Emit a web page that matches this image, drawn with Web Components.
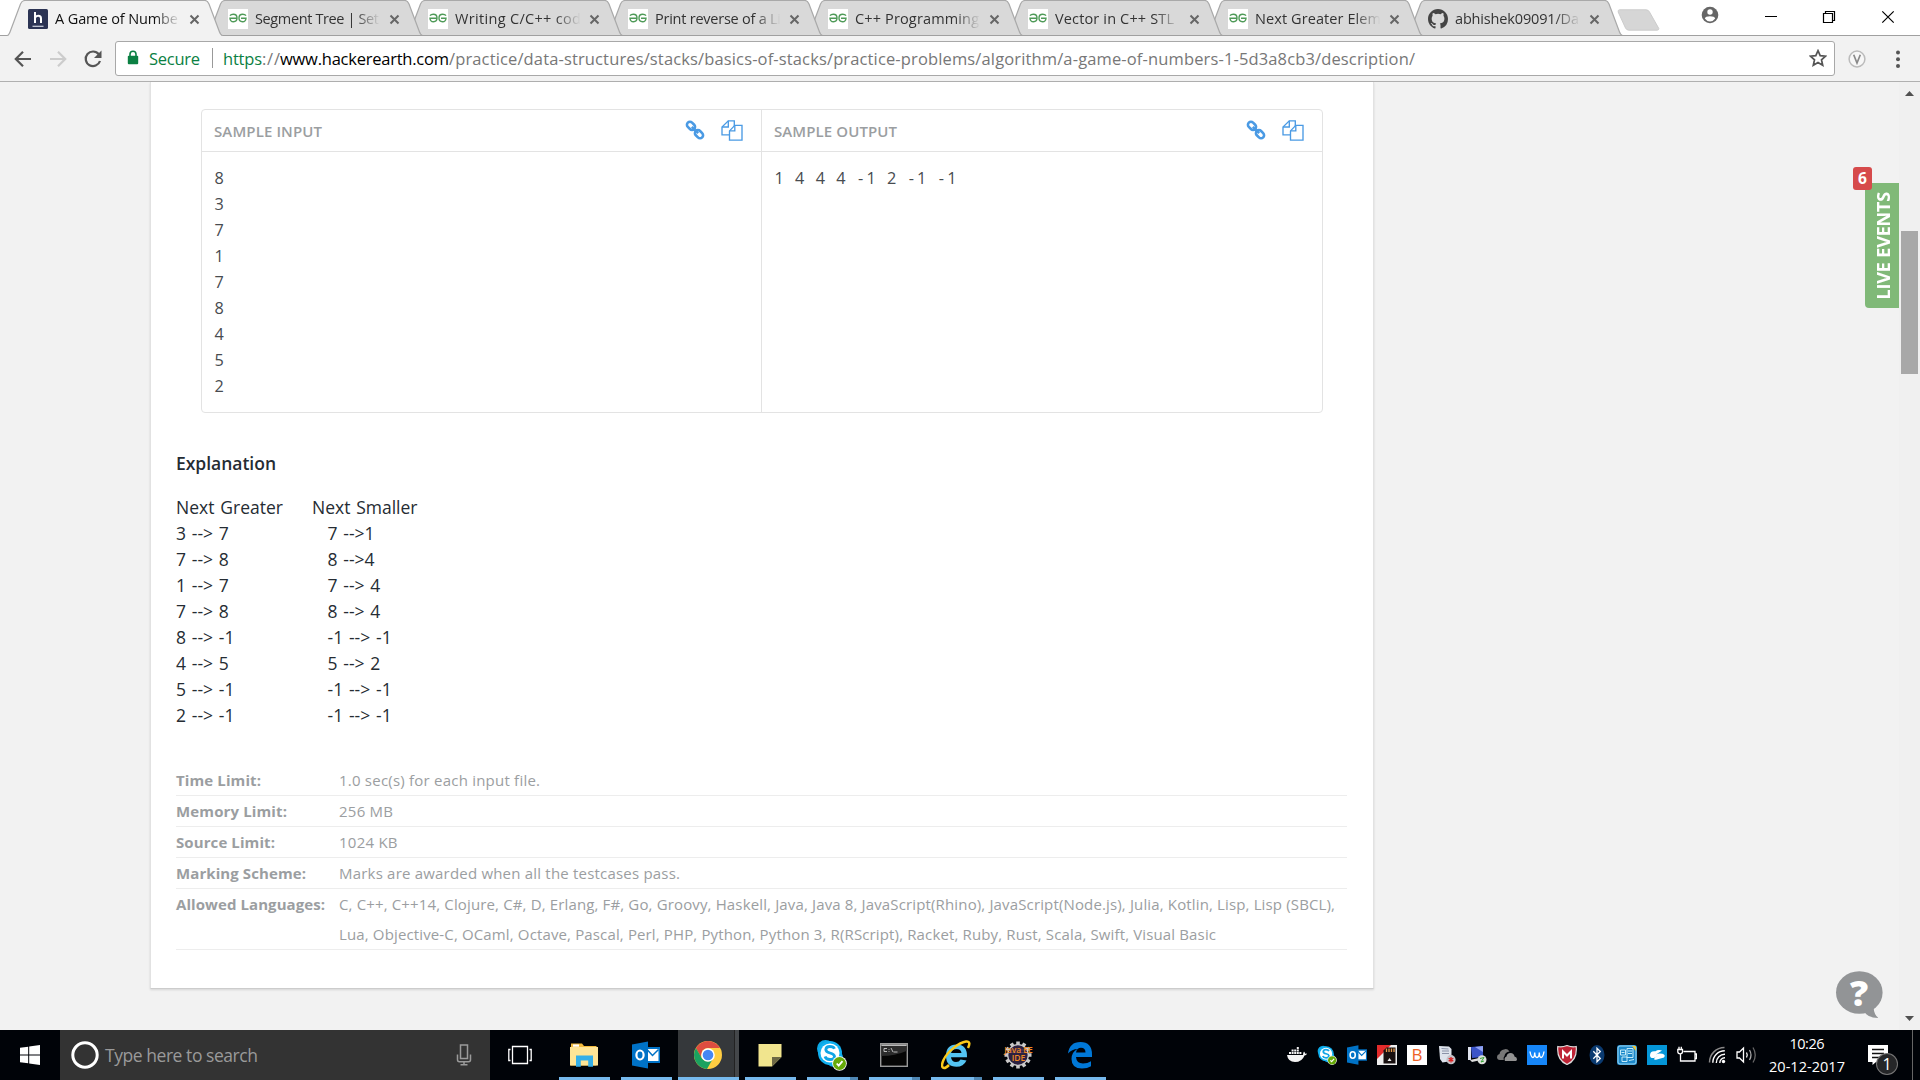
<!DOCTYPE html>
<html lang="en">
<head>
<meta charset="utf-8">
<title>A Game of Numbers</title>
<style>
html,body{margin:0;padding:0;height:1080px;overflow:hidden;background:#f2f2f2}
body{font-family:"Open Sans","Noto Sans",sans-serif}
</style>
</head>
<body>
<app-desktop></app-desktop>
<script>
const define=(name,html,after)=>customElements.define(name,class extends HTMLElement{
  connectedCallback(){
    if(this.shadowRoot)return;
    const t=document.createElement('template');
    t.innerHTML=typeof html==='function'?html(this):html;
    this.attachShadow({mode:'open'}).appendChild(t.content.cloneNode(true));
    if(after)after(this);
  }
});

/* Text run spaced to occupy an exact width: <fit-text w="120">label</fit-text> */
define('fit-text','<style>:host{display:block;white-space:pre;width:max-content}span{display:inline-block}</style><span><slot></slot></span>',el=>{
  const s=el.shadowRoot.querySelector('span'),w=+el.getAttribute('w');
  el.style.width=w+'px';
  const n=el.textContent.length;
  if(w&&n>1)s.style.letterSpacing=((w-s.getBoundingClientRect().width)/(n-1)).toFixed(4)+'px';
});

const I={
h:[20,20,`<rect width="20" height="20" rx="1.5" fill="#2c3454"/><path d="M7 3v11M7 8.6q1.400-1.800 3.300-1.800 2.700 0 2.700 2.600V14" fill="none" stroke="#fff" stroke-width="2"/><path d="M4.500 17.300h11" stroke="#cfd3e0" stroke-width="1.200"/>`],
gfg:[20,20,`<rect width="20" height="20" fill="#fff"/><g fill="none" stroke="#4f9a58" stroke-width="1.400"><path d="M2 6.700Q3 5.300 5.300 5.300 9 5.300 9 9T5.500 12.700Q2.200 12.700 2 9.200H9"/><path d="M18 6.700Q17 5.300 14.700 5.300 11 5.300 11 9T14.500 12.700Q17.800 12.700 18 9.200H13"/></g>`],
github:[20,20,`<path transform="scale(1.25)" fill="#444" d="M8 0C3.580 0 0 3.580 0 8c0 3.540 2.290 6.530 5.470 7.590.4.070.55-.17.55-.38v-1.490c-2.010.37-2.530-.49-2.690-.94-.09-.23-.48-.94-.82-1.130-.28-.15-.68-.52-.01-.53.63-.01 1.080.58 1.230.82.72 1.210 1.870.87 2.330.66.070-.52.28-.87.51-1.070-1.780-.2-3.640-.89-3.640-3.950 0-.87.31-1.590.82-2.150-.08-.2-.36-1.020.08-2.120 0 0 .67-.21 2.200.82a7.600 7.600 0 0 1 4 0c1.530-1.040 2.200-.82 2.200-.82.44 1.100.16 1.920.08 2.120.51.56.82 1.270.82 2.150 0 3.070-1.870 3.750-3.650 3.950.29.25.54.73.54 1.480v2.190c0 .21.15.46.55.38A8 8 0 0 0 16 8c0-4.420-3.580-8-8-8z"/>`],
x:[11,11,`<path d="M1.500 1.500l8 8M9.500 1.500l-8 8" stroke="#666" stroke-width="2"/>`],
back:[18,18,`<path d="M17 9H2M9 1.800L1.800 9 9 16.200" fill="none" stroke="#555" stroke-width="2.200"/>`],
fwd:[18,18,`<path d="M1 9h15M9 1.800L16.200 9 9 16.200" fill="none" stroke="#ccc" stroke-width="2.200"/>`],
reload:[20,20,`<path d="M15.800 5.300A7.300 7.300 0 1 0 17 12" fill="none" stroke="#555" stroke-width="2.200"/><path d="M18.500 1.500v7.500h-7.500z" fill="#555"/>`],
lock:[12,15,`<rect x=".8" y="5.800" width="10.400" height="8.500" rx="1" fill="#0b8043"/><path d="M3 6.500V4.200a3 3 0 0 1 6 0v2.300" fill="none" stroke="#0b8043" stroke-width="1.600"/>`],
star:[18,18,`<path d="M9 1.700l2.200 5 5.300.5-4 3.600 1.200 5.400L9 13.400l-4.700 2.800 1.200-5.400-4-3.600 5.300-.5z" fill="none" stroke="#555" stroke-width="1.700"/>`],
v:[18,18,`<circle cx="9" cy="9" r="7.900" fill="#f7f7f7" stroke="#bbb" stroke-width="1.500"/><path d="M5.700 4.800L9 13l3.300-8.200" fill="none" stroke="#8a8a8a" stroke-width="1.700"/>`],
dots:[6,18,`<g fill="#555"><circle cx="3" cy="2.500" r="2"/><circle cx="3" cy="9.300" r="2"/><circle cx="3" cy="16" r="2"/></g>`],
user:[18,18,`<circle cx="9" cy="9" r="8.300" fill="#666"/><circle cx="9" cy="6" r="2.700" fill="#fff"/><path d="M3.800 12.600Q4.500 10.300 9 10.300T14.200 12.600Q12.400 15.400 9 15.400T3.800 12.600z" fill="#fff"/>`],
min:[14,14,`<path d="M1 7.500h12" stroke="#000"/>`],
restore:[14,14,`<path d="M1.500 3.500h9v9h-9zM3.500 3.500v-2h9v9h-2" fill="none" stroke="#000" stroke-width="1.200"/>`],
close:[14,14,`<path d="M1.300 1.300l11.400 11.400M12.700 1.300L1.300 12.700" stroke="#000" stroke-width="1.200"/>`],
plus:[44,22,`<path d="M2.500.8H29Q31.500.8 32.500 3L41.800 19.500Q42 21.200 40 21.200H12Q9.500 21.200 8.500 19L1.200 3Q.8.8 2.500.8z" fill="#d6d6d6" stroke="#ccc"/>`],
link:[20,20,`<g fill="none" stroke="#4a9ae4" stroke-width="2.600"><rect x="1.500" y="2.800" width="9" height="6" rx="3" transform="rotate(45 6 5.800)"/><rect x="9.500" y="11.200" width="9" height="6" rx="3" transform="rotate(45 14 14.200)"/><path d="M6.800 6.800l6.400 6.400" stroke-width="2.400"/></g>`],
copy:[22,21,`<g fill="#fff" stroke="#4a9ae4" stroke-width="1.350"><path d="M7.300.8h6v14H1V7z"/><path d="M7.300.8V7H1" fill="none"/><path d="M13.800 5.300h7.200v14.800H8.500v-9.200z"/><path d="M13.800 5.300v5.600H8.500" fill="none"/></g>`],
help:[48,50,`<ellipse cx="24.300" cy="21.500" rx="23.300" ry="21.300" fill="#929496"/><path d="M29 40Q32 47 43.500 47 39 44 38.500 36z" fill="#929496"/>`],
up:[21,20,`<path d="M6 14h9l-4.500-5z" fill="#505050"/>`],
down:[21,20,`<path d="M6 6h9l-4.500 5z" fill="#505050"/>`],
win:[20,20,`<path d="M0 2.800L8.200 1.700V9.500H0zM9.200 1.500L20 0v9.500H9.200zM0 10.500h8.200v7.800L0 17.200zM9.200 10.500H20V20L9.200 18.500z" fill="#fff"/>`],
cortana:[28,28,`<circle cx="14" cy="14" r="12.200" fill="none" stroke="#fff" stroke-width="3"/>`],
mic:[16,22,`<g fill="none" stroke="#9a9a9a" stroke-width="1.500"><rect x="4.500" y="1" width="7" height="13.500"/><path d="M1.500 10.500v5.300q0 2 2 2h9q2 0 2-2v-5.300M8 18v3M4.500 20.800h7"/></g>`],
taskview:[24,20,`<path d="M4.500 1.500h15v17h-15zM2.500 4.500H.8v11h1.700M21.500 4.500h1.700v11h-1.700" fill="none" stroke="#fff" stroke-width="1.300"/>`],
explorer:[28,24,`<path d="M1 .5h11l2 2.500h12.500V22.500H.5z" fill="#f3bb3d"/><path d="M0 4h28v18.500H0z" fill="#ffe596"/><path d="M3 1.500h6v2.200H3z" fill="#fff"/><path d="M6 23.800V12.500h17v11.300h-4.800v-6.300h-7.400v6.300z" fill="#35afe8"/>`],
outlook:[28,28,`<path d="M13 6h15v16H13z" fill="#0072c6"/><path d="M15 8h11.500v12H15z" fill="#fff"/><path d="M15 8.500l5.500 6 6-6" fill="none" stroke="#0072c6" stroke-width="1.500"/><path d="M0 3.500L16 .5v27L0 24.500z" fill="#0072c6"/><ellipse cx="8" cy="14" rx="3.600" ry="4.500" fill="none" stroke="#fff" stroke-width="2.200"/>`],
chrome:[28,28,`<circle cx="14" cy="14" r="14" fill="#ffcd42"/><path d="M1.900 7A14 14 0 0 1 26.100 7H14A7 7 0 0 0 8 10.500L7 16z" fill="#de4d40"/><path d="M1.900 7A14 14 0 0 0 13 28l6-10.500A7 7 0 0 1 8 17.500z" fill="#1ba260"/><circle cx="14" cy="14" r="6.800" fill="#fff"/><circle cx="14" cy="14" r="5.300" fill="#4687f4"/>`],
sticky:[24,24,`<path d="M.5 1h23v13L14 23.500H.5z" fill="#f1e58e"/><path d="M14 23.500V14h9.500z" fill="#6d6845"/>`],
skype:[31,32,`<circle cx="9.500" cy="9.500" r="8.500" fill="#0ba8e5"/><circle cx="18" cy="19" r="9" fill="#0ba8e5"/><circle cx="14" cy="14" r="12" fill="#10b0f0"/><circle cx="14" cy="14" r="9.500" fill="#fff"/><path d="M18.500 9.800Q17.500 7.500 13.800 7.500T9.800 10.600Q9.800 13 14 14T18.500 17.200Q18.500 20.500 14 20.500 10 20.500 9 17.500" fill="none" stroke="#10a5e6" stroke-width="2.800"/><circle cx="23.500" cy="24.500" r="7.300" fill="#fff"/><circle cx="23.500" cy="24.500" r="6.500" fill="#66aa08"/><path d="M20.700 24.500l2 2.200 3.800-4.500" fill="none" stroke="#fff" stroke-width="1.800"/>`],
cmd:[28,24,`<rect x=".7" y=".7" width="26.600" height="22.600" fill="#050505" stroke="#999" stroke-width="1.400"/><path d="M1.400 1.400h25.200v1.600H1.400z" fill="#bbb"/><path d="M1.500 13Q15 13 26.500 8v-5h-25z" fill="#2c2c2c"/><path d="M4 5.500h3M4 5.500v3h3M9 6v.8M9 8v.8M11 5l2 4M13.500 9h4" fill="none" stroke="#ccc" stroke-width=".9"/>`],
ie:[30,30,`<path d="M25.500 20.500Q22.500 26.800 15.500 26.800 5 26.800 5 15.800T15.500 4.500Q26.500 4.500 26 17.300H10Q10.500 22 15 22q3.200 0 4.500-2.500z" fill="#54c4f3"/><path d="M10 13h10.500Q20 9 15.500 9T10 13z" fill="#000309"/><path d="M8 25C2.500 30.500-1 28 2.500 20 6 12 18 2.500 25 1.600 29 1 29 4 27 8" fill="none" stroke="#fbc91a" stroke-width="2.500"/>`],
eclipse:[30,30,`<g fill="#c9c9c9"><circle cx="15" cy="15" r="11"/><path d="M13.200 1.500h3.600v27h-3.600zM1.500 13.200h27v3.600h-27z"/><path d="M13.200 1.500h3.600v27h-3.600zM1.500 13.200h27v3.600h-27z" transform="rotate(30 15 15)"/><path d="M13.200 1.500h3.600v27h-3.600zM1.500 13.200h27v3.600h-27z" transform="rotate(60 15 15)"/></g><circle cx="15" cy="15" r="9.700" fill="#2c2140"/><path d="M8 10h14M7 12.500h16" stroke="#4a3860"/>`],
edge:[26,28,`<path d="M1 12.500Q2.500 1 13.500 1 25 1 25 13.500V16H9Q9.500 22.500 16 22.500q4.500 0 8-2.200v5Q20.500 27.500 15 27.500 4.500 27.500 4.500 18 4.500 11 10.500 8 5 8 1 12.500zM9 11.500h9.500Q18.500 6.800 14 6.800 9.800 6.800 9 11.500z" fill="#0078d7"/>`],
docker:[20,20,`<path d="M0 10h16q0-2.500 1-3.500 1 1 1.200 2.200 1-.4 1.800 0-.6 1.500-2.500 1.700Q15 17 8 17 1 17 0 10z" fill="#f4f4f4"/><path d="M2 7h2v2H2zM4.600 7h2v2h-2zM7.200 7h2v2h-2zM9.800 7h2v2h-2zM12.400 7h2v2h-2zM4.600 4.400h2v2h-2zM7.200 4.400h2v2h-2zM9.800 4.400h2v2h-2zM9.800 2h2v2h-2z" fill="#f4f4f4"/>`],
card:[20,20,`<path d="M0 0h20v20H0z" fill="#e32b2b"/><path d="M0 8L8 0h12v3L0 20z" fill="#e32b2b"/><path d="M0 20V14L14 0h6v20z" fill="#eee"/><path d="M6.500 5.500L9.500 2.500h9v16h-12z" fill="#181010"/><path d="M9.500 3.500v3.500M12 3.500v3.500M14.500 3.500v3.500M17 3.500v3.500" stroke="#e89b4b" stroke-width="1.300"/><path d="M10.500 16l2-3 2 3z" fill="#eee"/>`],
bbox:[20,20,`<path d="M0 0h20v20H0z" fill="#fff"/>`],
server:[20,20,`<path d="M2 1l10 .5 2.500 2.500v12l-9 1.500L3 14z" fill="#dde3ec"/><path d="M4.500 3.500l7 .5M5 6h7M5 8.500h7" fill="none" stroke="#8a92a8" stroke-width="1"/><circle cx="14" cy="14.700" r="4.600" fill="#c3c3c9"/><path d="M14 12v5.400M11.700 13.300l4.600 2.800M16.300 13.300l-4.600 2.800" stroke="#d22" stroke-width="1.300"/>`],
monitor:[20,20,`<path d="M1 2h3v13H1z" fill="#dfe3ee"/><path d="M4 2l12-1v11L5 13z" fill="#3b54c8"/><path d="M8 2l8-1v6z" fill="#8ea1f2"/><path d="M3 15l9-2 2 2-9 2z" fill="#ddd"/><circle cx="15" cy="14.800" r="4.500" fill="#dbe0db"/><path d="M13 13.500l4-1-3 4.500 3-1" fill="none" stroke="#36a336" stroke-width="1"/>`],
onedrive:[20,14,`<path d="M3 12Q0 12 0 9q0-2.500 2.500-3Q3 2 7 1.500 10 0 12.500 3.500 8 4 7.500 8 6 9.500 6.800 12z" fill="#777"/><path d="M8 13Q6.500 10 9.500 8.500 10 5 13.500 5t4 3.500Q20 9 20 11.300T18 13z" fill="#929292"/>`],
wave:[20,20,`<path d="M0 0h20v20H0z" fill="#1686f8"/><path d="M3 6.500q1 6 3 6 1.500 0 1.700-5 .2 5 2.300 5 2.100 0 2.300-5 .2 5 1.700 5 2 0 3-6" fill="none" stroke="#fff" stroke-width="1.400"/>`],
mcafee:[20,20,`<path d="M.8 1.500Q5 2.500 10 .5q5 2 9.200 1Q20.500 15 10 19.500-.5 15 .8 1.500z" fill="#bf2335" stroke="#ddd" stroke-width="1.200"/><path d="M6 13.500V6.500L10 10.500 14 6.500v7" fill="none" stroke="#fff" stroke-width="2"/>`],
bt:[20,20,`<ellipse cx="10" cy="10" rx="7.500" ry="10" fill="#0a3a70"/><path d="M6.300 6.200l7 7.300L10 16.800V3.200l3.300 3.300-7 7.300" fill="none" stroke="#fff" stroke-width="1.300"/>`],
intel:[20,20,`<rect width="20" height="20" rx="2.500" fill="#1d88c9"/><rect x="1" y="1" width="18" height="18" rx="2" fill="none" stroke="#9fd8f4"/><path d="M3.500 5h5v5h-5zM10 3.500h6v9h-6zM5 12h5v4.500H5z" fill="none" stroke="#c5ecfa"/><path d="M11 6h4M11 8.500h4M4.500 7.500h3M12 15.500l5-1" stroke="#c5ecfa"/><path d="M15 1h4v5z" fill="#e9c643"/>`],
swirl:[20,20,`<path d="M0 0h20v20H0z" fill="#0496d8"/><path d="M3 10.500Q3 5.500 8.500 6.300 11 4 15 5.500L9 9.500Q12 7.700 15.500 8.800 19 10 17 12.500L9 14.800Q6 15 8 12.500L12 10 7 13Q3 13.500 3 10.500z" fill="#fff"/>`],
battery:[20,18,`<path d="M6.500 5.500H18v9.500H3.500V9.500M18.500 8h1v4.500h-1M.8 3.500h4.700v2.300q0 2-2.300 2T.8 5.800zM2 3.500V.8M4.300 3.500V.8M3.500 8v2" fill="none" stroke="#fff" stroke-width="1.300"/>`],
wifi:[18,18,`<g fill="none"><path d="M1.500 16.500A15 15 0 0 1 16.500 1.500" stroke="#888" stroke-width="1.500"/><path d="M4.800 16.800A12 12 0 0 1 16.800 4.800M8.300 17A8.500 8.500 0 0 1 17 8.300M11.800 17A5 5 0 0 1 17 11.800" stroke="#fff" stroke-width="1.400"/></g><circle cx="15.500" cy="15.500" r="1.700" fill="#fff"/>`],
sound:[22,20,`<path d="M1 7h2.500L7.500 3v14l-4-4H1z" fill="none" stroke="#fff" stroke-width="1.300"/><path d="M10.500 7.500q1.500 2.500 0 5" fill="none" stroke="#fff" stroke-width="1.300"/><path d="M13.500 5q3 5 0 10" fill="none" stroke="#aaa" stroke-width="1.300"/><path d="M17 2.500q4.500 7.500 0 15" fill="none" stroke="#666" stroke-width="1.300"/>`],
note:[20,20,`<path d="M0 0h20v17H8L4.500 20v-3H0z" fill="#fff"/><path d="M4 4.500h12M4 8.500h12M4 12.500h8" stroke="#111" stroke-width="1.400"/>`]
};
define('svg-icon',el=>{
  const [w,h,b]=I[el.getAttribute('name')],W=el.getAttribute('w')||w,H=el.getAttribute('h')||h;
  return `<style>:host{display:block;flex:none;width:${W}px;height:${H}px}svg{display:block}</style><svg width="${W}" height="${H}" viewBox="0 0 ${w} ${h}" preserveAspectRatio="none">${b}</svg>`;
});

define('browser-tab',el=>{
  const on=el.hasAttribute('active');
  return `<style>:host{display:grid;flex:0 0 216px;height:36px;margin-right:-16px;z-index:${el.getAttribute('z')};position:relative}
  .bg,.in{grid-area:1/1}.bg{display:block}
  .in{display:flex;align-items:center;padding:0 0 0 21px;height:38px;font-size:14.500px;color:${on?'#111':'#333'}}
  .t{width:128px;margin-left:7px;margin-top:-2px;-webkit-mask-image:linear-gradient(90deg,#000 78%,transparent 98%);mask-image:linear-gradient(90deg,#000 78%,transparent 98%)}
  .x{margin-left:6px}</style>
  <svg class="bg" width="216" height="36"><path d="M0 36Q2 35 3 32L13.500 4Q15 .5 18 .5H198Q200.500 .5 202 4L212.500 32Q213.500 35 216 36" fill="${on?'#f2f2f2':'#d9d9d9'}" stroke="#a9a9a9" stroke-width="1.200"/>${on?'':'<path d="M0 35.500H216" stroke="#a0a0a0"/>'}</svg>
  <div class="in"><svg-icon name="${el.getAttribute('icon')}"></svg-icon><div class="t"><fit-text w="${el.getAttribute('w')}">${el.getAttribute('label')}</fit-text></div><svg-icon class="x" name="x"></svg-icon></div>`;
});

define('tab-strip',`<style>:host{display:flex;height:36px;background:linear-gradient(#a0a0a0,#a0a0a0) 0 35px/100% 1px no-repeat #fff;padding-left:7px}
.tabs{display:flex;width:1616px}.new{padding:9px 0 0;margin-left:-6px}
.ctl{display:flex;align-items:flex-start}
.u{margin:6px 0 0 40px}.a{margin:9px 0 0 45px}.b{margin:10px 0 0 44px}.c{margin:10px 0 0 45px}</style>
<div class="tabs">
<browser-tab active z="9" icon="h" w="123" label="A Game of Numbe"></browser-tab>
<browser-tab z="8" icon="gfg" w="124" label="Segment Tree | Set"></browser-tab>
<browser-tab z="7" icon="gfg" w="126" label="Writing C/C++ cod"></browser-tab>
<browser-tab z="6" icon="gfg" w="126" label="Print reverse of a Li"></browser-tab>
<browser-tab z="5" icon="gfg" w="124" label="C++ Programming"></browser-tab>
<browser-tab z="4" icon="gfg" w="119" label="Vector in C++ STL"></browser-tab>
<browser-tab z="3" icon="gfg" w="126" label="Next Greater Elem"></browser-tab>
<browser-tab z="2" icon="github" w="124" label="abhishek09091/Da"></browser-tab>
</div><div class="new"><svg-icon name="plus"></svg-icon></div>
<div class="ctl"><svg-icon class="u" name="user"></svg-icon><svg-icon class="a" name="min"></svg-icon><svg-icon class="b" name="restore"></svg-icon><svg-icon class="c" name="close"></svg-icon></div>`);

define('address-bar',`<style>:host{display:flex;align-items:center;height:45px;background:#f2f2f2;border-bottom:1px solid #b0b0b0;padding:0 19px 0 14px}
.f{margin-left:17px}.r{margin:0 12px 0 16px}
.box{flex:none;width:1718px;height:33px;border:1px solid #a8a8a8;border-radius:3px;background:#fff;display:flex;align-items:center;margin-top:-1px;font-size:16.500px;color:#777}
.lock{margin:0 10px 2px 11px}.g{color:#0b8043}.k{color:#000}.sep{width:1px;height:20px;background:#999;margin:0 10px 0 12px}
.s{margin-left:auto;margin-right:7px}.v{margin-left:13px}.d{margin-left:auto}</style>
<svg-icon name="back"></svg-icon><svg-icon class="f" name="fwd"></svg-icon><svg-icon class="r" name="reload"></svg-icon>
<div class="box"><svg-icon class="lock" name="lock"></svg-icon><fit-text w="51" class="g">Secure</fit-text><i class="sep"></i><fit-text w="39" class="g">https</fit-text><fit-text w="18">://</fit-text><fit-text w="169" class="k">www.hackerearth.com</fit-text><fit-text w="966">/practice/data-structures/stacks/basics-of-stacks/practice-problems/algorithm/a-game-of-numbers-1-5d3a8cb3/description/</fit-text><svg-icon class="s" name="star"></svg-icon></div>
<svg-icon class="v" name="v"></svg-icon><svg-icon class="d" name="dots"></svg-icon>`);

define('sample-pane',el=>`<style>:host{display:block;flex:1;box-sizing:border-box}
:host(:first-child){flex:0 0 560px;border-right:1px solid #e3e3e3}
.hd{display:flex;align-items:center;height:41px;border-bottom:1px solid #e3e3e3;padding:0 18px 0 12px;font-size:15px;font-weight:600;color:#9b9ea1}
.l{margin-left:auto;margin-top:-1px}.c{margin-left:16px}
pre{margin:0;padding:13px 12.500px;font:16.250px/26px "Open Sans","Noto Sans",sans-serif;color:#484c50;word-spacing:7.100px}::slotted(i){font-style:normal;letter-spacing:3.200px;margin-left:1px}</style>
<div class="hd"><fit-text w="${el.getAttribute('w')}">${el.getAttribute('label')}</fit-text><svg-icon class="l" name="link"></svg-icon><svg-icon class="c" name="copy"></svg-icon></div><pre><slot></slot></pre>`);

const ex=[['3 --> 7','7 -->1'],['7 --> 8','8 -->4'],['1 --> 7','7 --> 4'],['7 --> 8','8 --> 4'],['8 --> -1','-1 --> -1'],['4 --> 5','5 --> 2'],['5 --> -1','-1 --> -1'],['2 --> -1','-1 --> -1']];
define('problem-explanation',`<style>:host{display:block;font-size:17.500px;line-height:26px;color:#252c33}h4{margin:0;font-size:17.500px;font-weight:600;line-height:26px;height:44px}.r{display:flex;word-spacing:1.250px}.r>*:first-child{flex:0 0 136px}.r>.o:first-child{flex-basis:151.500px}</style>
<h4><fit-text w="100">Explanation</fit-text></h4><div class="r"><div><fit-text w="107">Next Greater</fit-text></div><fit-text w="105.5">Next Smaller</fit-text></div>
${ex.map(r=>`<div class="r"><div class="o">${r[0].replace('>','&gt;')}</div><div>${r[1].replace('>','&gt;')}</div></div>`).join('')}`);

define('limit-row',el=>`<style>:host{display:flex;border-bottom:1px solid #ededed;font-size:15px;line-height:30px;color:#9b9ea1}b{flex:0 0 163px;font-weight:700}</style><b><fit-text w="${el.getAttribute('w')}">${el.getAttribute('label')}</fit-text></b><div><slot></slot></div>`);

define('problem-card',`<style>:host{display:block;box-sizing:border-box;width:1224px;height:907px;margin-left:150px;background:#fff;border:1px solid #e2e2e2;border-top:0;border-bottom-color:#ccc;box-shadow:0 1px 2px rgba(0,0,0,.12);padding:27px 25px 0}
.s{display:flex;box-sizing:border-box;width:1122px;height:304px;margin-left:25px;border:1px solid #e3e3e3;border-radius:4px}
problem-explanation{margin:37px 0}.lim{width:1171px}</style>
<div class="s"><sample-pane label="SAMPLE INPUT" w="108">8
3
7
1
7
8
4
5
2</sample-pane><sample-pane label="SAMPLE OUTPUT" w="123">1 4 4 4 <i>-</i>1 2 <i>-</i>1 <i>-</i>1</sample-pane></div>
<problem-explanation></problem-explanation>
<div class="lim">
<limit-row label="Time Limit:" w="85"><fit-text w="201">1.0 sec(s) for each input file.</fit-text></limit-row>
<limit-row label="Memory Limit:" w="111"><fit-text w="54">256 MB</fit-text></limit-row>
<limit-row label="Source Limit:" w="99"><fit-text w="58.5">1024 KB</fit-text></limit-row>
<limit-row label="Marking Scheme:" w="130"><fit-text w="341">Marks are awarded when all the testcases pass.</fit-text></limit-row>
<limit-row label="Allowed Languages:" w="149"><fit-text w="996">C, C++, C++14, Clojure, C#, D, Erlang, F#, Go, Groovy, Haskell, Java, Java 8, JavaScript(Rhino), JavaScript(Node.js), Julia, Kotlin, Lisp, Lisp (SBCL),</fit-text><fit-text w="877">Lua, Objective-C, OCaml, Octave, Pascal, Perl, PHP, Python, Python 3, R(RScript), Racket, Ruby, Rust, Scala, Swift, Visual Basic</fit-text></limit-row>
</div>`);

define('scroll-bar',`<style>:host{display:flex;flex-direction:column;width:21px;height:948px;background:#f0f0f0}.t{width:17px;height:143px;background:#a8a8a8;margin:129px 0 auto 2px}</style><svg-icon name="up"></svg-icon><div class="t"></div><svg-icon name="down"></svg-icon>`);

define('live-events',`<style>:host{position:absolute;right:21px;top:101px;width:34px;height:125px;background:#80b978;border-radius:4px 0 0 4px;display:flex;align-items:center;justify-content:center;color:#fff}
.t{writing-mode:vertical-rl;transform:rotate(180deg);font-size:18px;font-weight:700;line-height:22px;letter-spacing:-.18px;white-space:nowrap;margin-left:2px}
.n{position:absolute;left:-12px;top:-16px;width:19px;height:23px;border-radius:3px;background:#d64a4b;font-size:15.500px;line-height:23px;font-weight:700;text-align:center}</style><span class="t">LIVE EVENTS</span><span class="n">6</span>`);

define('help-bubble',`<style>:host{position:absolute;left:1835px;top:889px;display:grid;width:48px;height:50px}svg-icon,span{grid-area:1/1}span{color:#fff;font-size:36px;font-weight:800;line-height:44px;text-align:center;z-index:1}</style><svg-icon name="help"></svg-icon><span>?</span>`);

define('web-page',`<style>:host{display:flex;position:relative;height:948px;background:#f2f2f2;justify-content:space-between}</style><problem-card></problem-card><live-events></live-events><help-bubble></help-bubble><scroll-bar></scroll-bar>`);

define('task-button',el=>`<style>:host{display:grid;flex:none;box-sizing:border-box;height:50px;width:51px;margin-right:11px;place-items:center;border-bottom:3px solid #76b9ed}
:host([active]){width:61px;margin:0 6px 0 -5px;background:linear-gradient(90deg,#35383b 56px,#222 56px,#222 57px,#44474a 57px)}
:host([multi]){border-image:linear-gradient(90deg,#76b9ed 41px,#4f87b4 41px) 3}
span{grid-area:1/1;font-size:8.500px;line-height:8px;font-weight:600;color:#f08a24;text-align:center;z-index:1}svg-icon{grid-area:1/1;margin:2px 2px 0 0}</style><svg-icon name="${el.getAttribute('icon')}"></svg-icon>${el.getAttribute('icon')==='eclipse'?'<span>Java EE<br>IDE</span>':''}`);

define('tray-item',el=>`<style>:host{display:grid;place-items:center;flex:0 0 30px;height:50px}svg-icon,span{grid-area:1/1}span{color:#ee6126;font-size:17px;line-height:20px;z-index:1}</style><svg-icon name="${el.getAttribute('icon')}" ${el.hasAttribute('s')?'w="20" h="20"':''}></svg-icon>${el.getAttribute('icon')==='bbox'?'<span>B</span>':''}`);

define('task-bar',`<style>:host{display:flex;height:50px;background:#000308;color:#fff}
.st{display:grid;place-items:center;width:60px}
.se{display:flex;align-items:center;box-sizing:border-box;width:430px;background:#333;color:#9a9a9a;padding:0 18px 0 11px;font-size:17.500px;gap:6px}.se .m{margin-left:auto}
.tv{display:grid;place-items:center;width:60px;padding-right:9px;box-sizing:border-box;margin-left:4px;margin-right:5px}
.apps{display:flex;width:723px}.tray{display:flex}
.ck{width:84px;margin-left:3px;display:flex;flex-direction:column;align-items:center;font-size:14.500px;line-height:23px;padding-top:2px}
.nt{margin:15px 0 0 19px;position:relative;width:20px}.nt b{position:absolute;left:9px;top:9px;width:20px;height:20px;border-radius:50%;background:#252628;box-shadow:0 0 0 1px #777;font-weight:400;font-size:16px;line-height:20px;text-align:center}
.sh{width:1px;background:#666;margin-left:24px}</style>
<div class="st"><svg-icon name="win"></svg-icon></div>
<div class="se"><svg-icon name="cortana"></svg-icon><fit-text w="153">Type here to search</fit-text><svg-icon class="m" name="mic"></svg-icon></div>
<div class="tv"><svg-icon name="taskview"></svg-icon></div>
<div class="apps"><task-button icon="explorer"></task-button><task-button icon="outlook"></task-button><task-button active icon="chrome"></task-button><task-button icon="sticky"></task-button><task-button multi icon="skype"></task-button><task-button multi icon="cmd"></task-button><task-button multi icon="ie"></task-button><task-button icon="eclipse"></task-button><task-button icon="edge"></task-button></div>
<div class="tray"><tray-item icon="docker"></tray-item><tray-item s icon="skype"></tray-item><tray-item s icon="outlook"></tray-item><tray-item icon="card"></tray-item><tray-item icon="bbox"></tray-item><tray-item icon="server"></tray-item><tray-item icon="monitor"></tray-item><tray-item icon="onedrive"></tray-item><tray-item icon="wave"></tray-item><tray-item icon="mcafee"></tray-item><tray-item icon="bt"></tray-item><tray-item icon="intel"></tray-item><tray-item icon="swirl"></tray-item><tray-item icon="battery"></tray-item><tray-item icon="wifi"></tray-item><tray-item icon="sound"></tray-item></div>
<div class="ck"><fit-text w="35">10:26</fit-text><fit-text w="76">20-12-2017</fit-text></div>
<div class="nt"><svg-icon name="note"></svg-icon><b>1</b></div><i class="sh"></i>`);

define('app-desktop','<style>:host{display:flex;flex-direction:column;width:1920px;height:1080px;overflow:hidden}</style><tab-strip></tab-strip><address-bar></address-bar><web-page></web-page><task-bar></task-bar>');
</script>
</body>
</html>
